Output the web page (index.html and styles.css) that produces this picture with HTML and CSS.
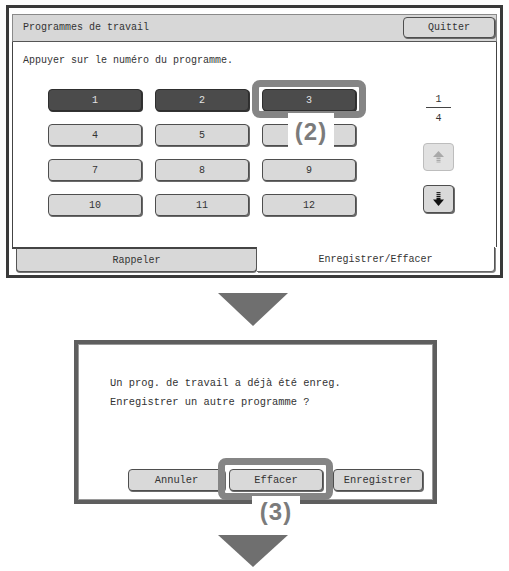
FILE: index.html
```html
<!DOCTYPE html>
<html>
<head>
<meta charset="utf-8">
<link rel="stylesheet" href="styles.css">
</head>
<body>
<div class="frame">
  <div class="titlebar">
    <span class="title">Programmes de travail</span>
    <div class="btn quit">Quitter</div>
  </div>
  <div class="content">
    <p class="instr">Appuyer sur le numéro du programme.</p>
    <div class="body">
      <div class="grid">
        <div class="key dark">1</div>
        <div class="key dark">2</div>
        <div class="key dark">3</div>
        <div class="key">4</div>
        <div class="key">5</div>
        <div class="key">6</div>
        <div class="key">7</div>
        <div class="key">8</div>
        <div class="key">9</div>
        <div class="key">10</div>
        <div class="key">11</div>
        <div class="key">12</div>
      </div>
      <div class="pager">
        <div class="frac"><span class="num">1</span><span class="den">4</span></div>
        <div class="pbtn disabled">
          <svg width="11" height="12" viewBox="0 0 11 12"><polygon points="5.5,0 11,6 0,6" fill="#a9a9a9"/><rect x="3.5" y="6.5" width="4" height="1.6" fill="#a9a9a9"/><rect x="3.5" y="8.8" width="4" height="1.2" fill="#a9a9a9"/><rect x="3.5" y="10.6" width="4" height="0.9" fill="#a9a9a9"/></svg>
        </div>
        <div class="pbtn">
          <svg width="11" height="14" viewBox="0 0 11 14"><rect x="3.5" y="0" width="4" height="0.9" fill="#111"/><rect x="3.5" y="1.8" width="4" height="1.1" fill="#111"/><rect x="3.5" y="3.8" width="4" height="1.5" fill="#111"/><rect x="3.5" y="6" width="4" height="2" fill="#111"/><polygon points="0,7.5 11,7.5 5.5,14" fill="#111"/></svg>
        </div>
      </div>
    </div>
    <div class="callout c2"></div>
    <div class="label l2">(2)</div>
  </div>
  <div class="tabs">
    <div class="tab">Rappeler</div>
    <div class="tab active">Enregistrer/Effacer</div>
  </div>
</div>
<div class="tri"></div>
<div class="dialog">
  <p class="msg">Un prog. de travail a déjà été enreg.<br>Enregistrer un autre programme ?</p>
  <div class="actions">
    <div class="btn dbtn w97">Annuler</div>
    <div class="btn dbtn w94">Effacer</div>
    <div class="btn dbtn w90">Enregistrer</div>
  </div>
  <div class="callout c3"></div>
  <div class="label l3">(3)</div>
</div>
<div class="tri tri2"></div>
</body>
</html>
```
FILE: styles.css
```css
* { box-sizing: border-box; }
html, body { margin: 0; padding: 0; background: #fff; }
body {
  font-family: "Liberation Mono", "DejaVu Sans Mono", monospace;
  font-size: 10px;
  color: #333;
  width: 509px;
  height: 571px;
  overflow: hidden;
}
p { margin: 0; }

.frame {
  margin: 5px 0 0 6px;
  width: 497px;
  border: 3px solid #3a3a3a;
  padding: 6px 3px 3px 3px;
  background: #fff;
}

.titlebar {
  height: 28px;
  background: #d7d7d7;
  border: 1px solid #8a8a8a;
  border-bottom-color: #555;
  display: flex;
  align-items: center;
  justify-content: space-between;
  padding: 0 1px 0 10px;
}
.title { line-height: 14px; }

.btn {
  display: flex;
  align-items: center;
  justify-content: center;
  background: #d9d9d9;
  border: 1px solid #4e4e4e;
  border-radius: 4px;
  box-shadow: 1px 1px 0 #6a6a6a;
  color: #333;
}
.quit { width: 92px; height: 21px; margin-top: -1px; }

.content {
  position: relative;
  height: 205px;
  border-left: 1px solid #444;
  border-right: 1px solid #444;
  padding: 12px 10px 0 10px;
}
.instr { line-height: 14px; }
.body { display: flex; margin-top: 21px; }
.grid {
  margin-left: 25px;
  display: grid;
  grid-template-columns: repeat(3, 94px);
  grid-auto-rows: 22px;
  column-gap: 13px;
  row-gap: 13px;
}
.key {
  display: flex;
  align-items: center;
  justify-content: center;
  background: #d9d9d9;
  border: 1px solid #4e4e4e;
  border-radius: 4px;
  box-shadow: 1px 1px 0 #6a6a6a;
}
.key.dark {
  background: #4b4b4b;
  border-color: #2e2e2e;
  color: #e2e2e2;
  box-shadow: 1px 1px 0 #333;
}

.pager {
  margin-left: 67px;
  width: 31px;
  display: flex;
  flex-direction: column;
  align-items: center;
}
.frac {
  margin-top: 4px;
  width: 25px;
  display: flex;
  flex-direction: column;
  align-items: center;
}
.num { line-height: 13px; padding-bottom: 1px; width: 100%; text-align: center; }
.den { line-height: 13px; padding-top: 4px; border-top: 1px solid #444; width: 100%; text-align: center; }
.pbtn {
  width: 31px;
  height: 28px;
  margin-top: 14px;
  display: flex;
  align-items: center;
  justify-content: center;
  background: #d9d9d9;
  border: 1px solid #4e4e4e;
  border-radius: 4px;
  box-shadow: 1px 1px 0 #6a6a6a;
}
.pbtn.disabled {
  margin-top: 18px;
  background: #e1e1e1;
  border-color: #bdbdbd;
  box-shadow: none;
}

.callout {
  position: absolute;
  border: 7px solid #858585;
  border-radius: 8px;
}
.label {
  position: absolute;
  background: #fff;
  color: #7b7b7b;
  font-family: "Liberation Sans", Arial, sans-serif;
  font-weight: bold;
  font-size: 24px;
  letter-spacing: 1px;
  text-align: center;
}
.c2 { left: 239px; top: 38px; width: 114px; height: 38px; }
.l2 { left: 275px; top: 71px; width: 46px; height: 37px; line-height: 37px; }

.tabs {
  display: flex;
  height: 25px;
  padding: 0 2px 0 4px;
  background: linear-gradient(#444, #444) 0 0 / 5px 2px no-repeat;
}
.tab {
  display: flex;
  align-items: center;
  justify-content: center;
  padding-top: 1px;
}
.tabs .tab:first-child {
  width: 241px;
  background: #d8d8d8;
  border: 1px solid #555;
  border-top: 2px solid #444;
  border-radius: 0 0 4px 4px;
  box-shadow: 0 1px 0 #777;
}
.tab.active {
  flex: 1;
  background: #fff;
  border-right: 1px solid #555;
  border-bottom: 1px solid #666;
  border-radius: 0 0 4px 0;
  box-shadow: 1px 1px 0 #888;
  padding-top: 0;
}

.tri {
  margin: 15px 0 0 218px;
  width: 0;
  height: 0;
  border-left: 35px solid transparent;
  border-right: 35px solid transparent;
  border-top: 33px solid #6f6f6f;
}
.tri2 { margin-top: 31px; border-top-width: 32px; }

.dialog {
  position: relative;
  margin: 14px 0 0 74px;
  width: 363px;
  height: 164px;
  border: 4px solid #5e5e5e;
  box-shadow: inset 0 0 0 1px #9a9a9a;
  padding: 30px 0 0 32px;
}
.msg { font-size: 10.4px; line-height: 19px; }
.actions {
  display: flex;
  margin-top: 57px;
  margin-left: 18px;
}
.dbtn { height: 22px; font-size: 10.4px; }
.w97 { width: 97px; }
.w94 { width: 94px; margin-left: 4px; }
.w90 { width: 90px; margin-left: 10px; }
.c3 { left: 140px; top: 114px; width: 115px; height: 42px; }
.l3 { left: 174px; top: 152px; width: 48px; height: 31px; line-height: 31px; }
```
